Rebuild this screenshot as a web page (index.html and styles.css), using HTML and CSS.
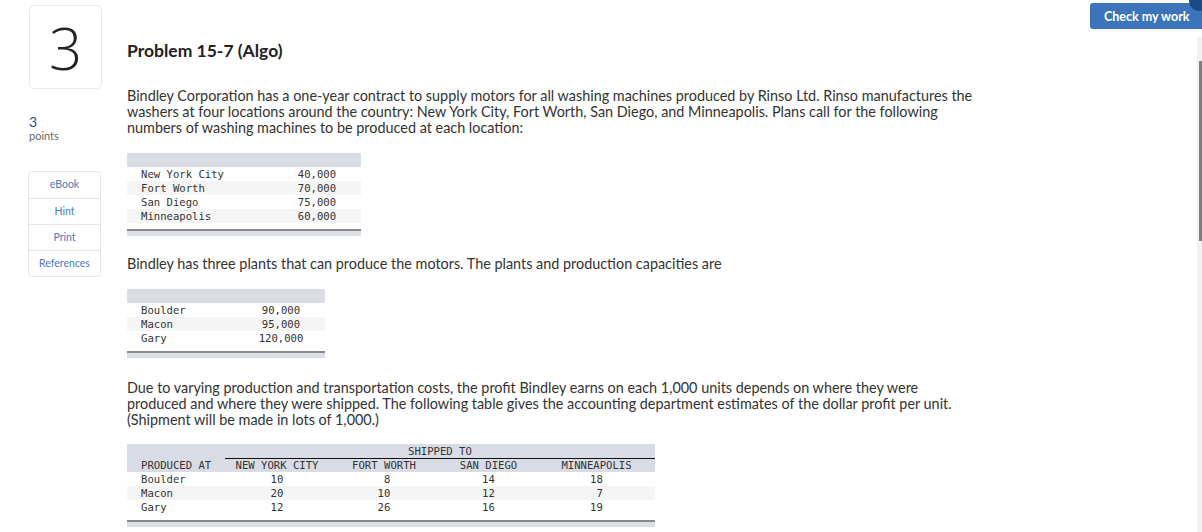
FILE: index.html
```html
<!DOCTYPE html>
<html>
<head>
<meta charset="utf-8">
<link rel="stylesheet" href="styles.css">
</head>
<body>
<div class="page">
  <aside class="side">
    <div class="qnum">3</div>
    <div class="pts"><span class="pts-n">3</span><span class="pts-l">points</span></div>
    <ul class="tools">
      <li>eBook</li>
      <li>Hint</li>
      <li>Print</li>
      <li>References</li>
    </ul>
  </aside>
  <main class="content">
    <h1 class="title">Problem 15-7 (Algo)</h1>
    <p class="para p1">Bindley Corporation has a one-year contract to supply motors for all washing machines produced by Rinso Ltd. Rinso manufactures the washers at four locations around the country: New York City, Fort Worth, San Diego, and Minneapolis. Plans call for the following numbers of washing machines to be produced at each location:</p>
    <div class="tbl t1">
      <div class="hdr"></div>
      <div class="row"><span class="c1">New York City</span><span class="c2">40,000</span></div>
      <div class="row alt"><span class="c1">Fort Worth</span><span class="c2">70,000</span></div>
      <div class="row"><span class="c1">San Diego</span><span class="c2">75,000</span></div>
      <div class="row alt"><span class="c1">Minneapolis</span><span class="c2">60,000</span></div>
      <div class="foot"></div>
    </div>
    <p class="para p2">Bindley has three plants that can produce the motors. The plants and production capacities are</p>
    <div class="tbl t2">
      <div class="hdr"></div>
      <div class="row"><span class="c1">Boulder</span><span class="c2">90,000</span></div>
      <div class="row alt"><span class="c1">Macon</span><span class="c2">95,000</span></div>
      <div class="row"><span class="c1">Gary</span><span class="c2">120,000</span></div>
      <div class="foot"></div>
    </div>
    <p class="para p3">Due to varying production and transportation costs, the profit Bindley earns on each 1,000 units depends on where they were produced and where they were shipped. The following table gives the accounting department estimates of the dollar profit per unit. (Shipment will be made in lots of 1,000.)</p>
    <div class="tbl t3">
      <div class="hdr3">
        <div class="shipped-row"><span class="blank"></span><span class="shipped">SHIPPED TO</span></div>
        <div class="row3 colhead"><span class="c1">PRODUCED AT</span><span>NEW YORK CITY</span><span>FORT WORTH</span><span>SAN DIEGO</span><span>MINNEAPOLIS</span></div>
      </div>
      <div class="row3"><span class="c1">Boulder</span><span>10</span><span class="r1"> 8</span><span>14</span><span>18</span></div>
      <div class="row3 alt"><span class="c1">Macon</span><span>20</span><span class="r1">10</span><span>12</span><span> 7</span></div>
      <div class="row3"><span class="c1">Gary</span><span>12</span><span class="r1">26</span><span>16</span><span>19</span></div>
      <div class="foot"></div>
    </div>
  </main>
  <div class="topright">
    <button class="check">Check my work</button>
    <span class="dot"></span>
  </div>
  <div class="scroll"><div class="thumb"></div></div>
</div>
</body>
</html>
```
FILE: styles.css
```css
html, body {
  margin: 0;
  padding: 0;
  background: #fff;
  overflow: hidden;
}
body {
  font-family: Lato, "Open Sans", sans-serif;
  color: #333;
  width: 1202px;
  height: 532px;
}
.page {
  display: flex;
  position: relative;
  height: 532px;
}
.side {
  width: 73px;
  margin-left: 28px;
  padding-top: 5px;
  display: flex;
  flex-direction: column;
}
.qnum {
  width: 71px;
  height: 82px;
  border: 1px solid #e8e8e8;
  border-radius: 5px;
  margin-left: 1px;
  display: flex;
  align-items: center;
  justify-content: center;
  font-size: 58px;
  font-weight: 300;
  color: #222;
  font-family: "Open Sans", sans-serif;
}
.pts {
  display: flex;
  flex-direction: column;
  margin-top: 26px;
  margin-left: 1px;
}
.pts-n {
  font-size: 14px;
  line-height: 14px;
  color: #1e4f8f;
}
.pts-l {
  font-size: 11px;
  line-height: 14px;
  color: #666;
}
.tools {
  list-style: none;
  margin: 28px 0 0 0;
  padding: 0;
  border: 1px solid #e6e6e6;
  border-radius: 4px;
}
.tools li {
  height: 25px;
  line-height: 25px;
  text-align: center;
  font-size: 10.5px;
  color: #4a78c0;
  border-top: 1px solid #e6e6e6;
}
.tools li:first-child {
  border-top: none;
  height: 26px;
}
.content {
  margin-left: 26px;
  width: 850px;
  padding-top: 40px;
}
.title {
  margin: 0;
  font-size: 17.5px;
  font-weight: 700;
  color: #222;
  line-height: 22px;
}
.para {
  margin: 0;
  font-size: 14.4px;
  line-height: 16px;
  color: #333;
}
.p1 { margin-top: 26px; }
.p2 { margin-top: 20px; }
.p3 { margin-top: 22px; }
.tbl {
  font-family: "DejaVu Sans Mono", "Liberation Mono", monospace;
  font-size: 10.6px;
  color: #333;
}
.t1 { width: 234px; margin-top: 17px; }
.t2 { width: 198px; margin-top: 17px; }
.t3 { width: 528px; margin-top: 16px; }
.hdr {
  height: 14px;
  background: #d9dce5;
}
.row {
  display: grid;
  grid-template-columns: 1fr 88px;
  height: 14px;
  line-height: 14px;
  background: #fff;
}
.alt { background: #f5f5f5; }
.c1 { padding-left: 14px; }
.c2 { text-align: center; }
.foot {
  margin-top: 6px;
  height: 5px;
  border-top: 2px solid #8a8a8a;
  background: #dcdfe6;
}
.hdr3 {
  background: #d9dce5;
}
.shipped-row {
  display: grid;
  grid-template-columns: 98px 1fr;
  height: 14px;
  line-height: 14px;
}
.shipped {
  border-bottom: 1px solid #111;
  padding-left: 183px;
}
.row3 {
  display: grid;
  grid-template-columns: 98px 104px 110px 99px 117px;
  height: 14px;
  line-height: 14px;
  white-space: pre;
}
.row3 span { text-align: center; }
.row3 span.c1 { text-align: left; }
.row3.colhead { background: transparent; }
.row3:not(.colhead) { background: #fff; }
.row3.alt { background: #f5f5f5; }
.topright {
  position: absolute;
  top: 0;
  right: 0;
  width: 120px;
  height: 40px;
}
.check {
  position: absolute;
  left: 8px;
  top: 3px;
  width: 120px;
  height: 26px;
  border: none;
  border-radius: 3px;
  background: #3b74ba;
  color: #fff;
  font-family: Lato, "Open Sans", sans-serif;
  font-weight: 700;
  font-size: 12.5px;
  text-align: left;
  padding: 0 0 0 14px;
}
.dot {
  position: absolute;
  right: -7px;
  top: -9px;
  width: 20px;
  height: 20px;
  border-radius: 50%;
  background: #1a4a82;
}
.scroll {
  position: absolute;
  right: 0;
  top: 37px;
  width: 5px;
  bottom: 0;
  background: #f1f1f1;
}
.thumb {
  margin-top: 24px;
  margin-left: 2px;
  width: 3px;
  height: 180px;
  background: #7f7f7f;
}
```
